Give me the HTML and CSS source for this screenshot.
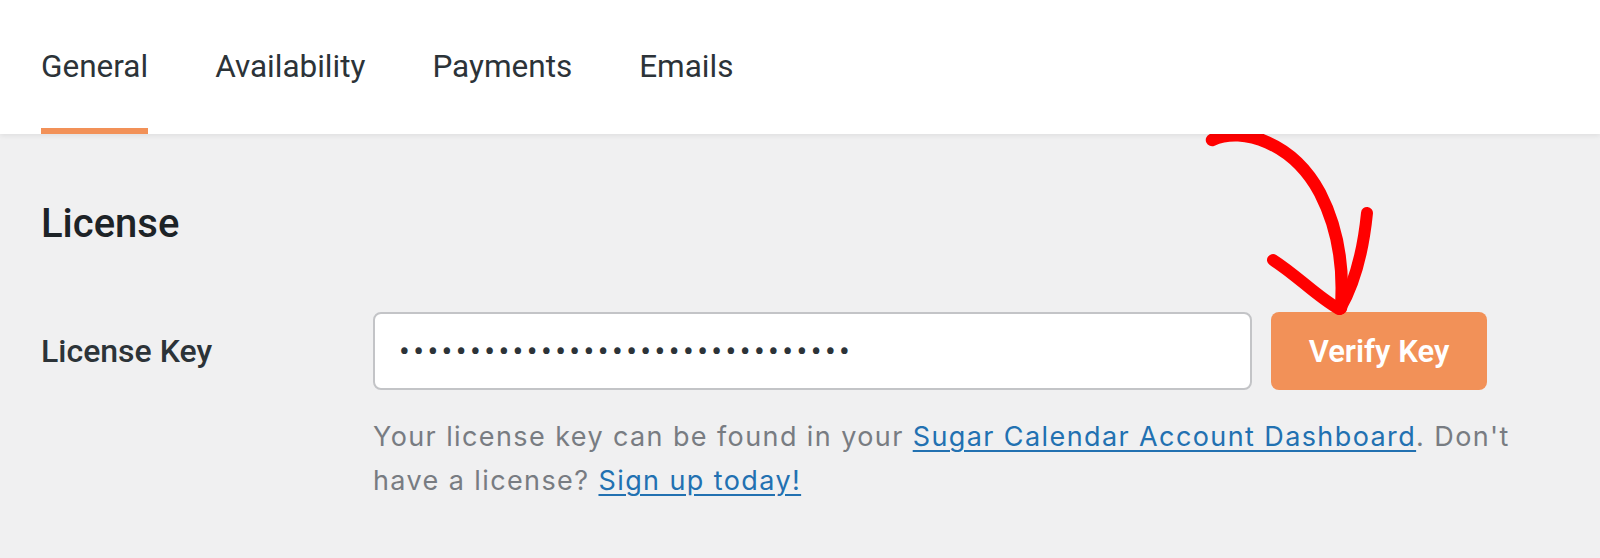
FILE: index.html
```html
<!DOCTYPE html>
<html lang="en">
<head>
<meta charset="utf-8">
<title>Settings - General</title>
<link rel="stylesheet" href="styles.css">
</head>
<body>
<header class="header">
  <nav class="tabs">
    <a class="tab tab-active">General</a>
    <a class="tab">Availability</a>
    <a class="tab">Payments</a>
    <a class="tab">Emails</a>
  </nav>
</header>
<main class="main">
  <h2 class="section-title">License</h2>
  <div class="row">
    <label class="row-label" for="key">License Key</label>
    <div class="row-field">
      <div class="field-line">
        <input id="key" class="key-input" type="password" value="abcdefghijklmnopqrstuvwxyz012345">
        <button class="verify-btn" type="button">Verify Key</button>
        <svg class="arrow" width="200" height="210" viewBox="0 0 200 210" aria-hidden="true">
          <path d="M14 22 C 45 8, 95 25, 122 75 C 140 110, 146 150, 143 190" fill="none" stroke="#ff0000" stroke-width="12.5" stroke-linecap="round"/>
          <path d="M75 142 C 100 158, 118 178, 141 191" fill="none" stroke="#ff0000" stroke-width="12" stroke-linecap="round"/>
          <path d="M169 95 C 166 125, 160 160, 142 191" fill="none" stroke="#ff0000" stroke-width="12" stroke-linecap="round"/>
        </svg>
      </div>
      <p class="help"><span class="help-line">Your license key can be found in your <a href="#" class="link">Sugar Calendar Account Dashboard</a>. Don't</span> <span class="help-line">have a license? <a href="#" class="link">Sign up today!</a></span></p>
    </div>
  </div>
</main>
</body>
</html>
```
FILE: styles.css
```css
* { box-sizing: border-box; }
html, body { margin: 0; padding: 0; }
body {
  background: #f0f0f1;
  font-family: Roboto, "Liberation Sans", Arial, sans-serif;
  color: #2c3338;
  height: 558px;
  overflow: hidden;
}
.header {
  background: #ffffff;
  height: 134px;
  box-shadow: 0 2px 5px rgba(0, 0, 0, 0.07);
  position: relative;
  z-index: 1;
}
.tabs {
  display: flex;
  gap: 67px;
  padding-left: 41px;
  height: 100%;
}
.tab {
  display: block;
  height: 134px;
  padding-top: 48px;
  font-size: 31.5px;
  line-height: 38px;
  color: #2c3338;
  text-decoration: none;
  border-bottom: 6px solid transparent;
}
.tab-active { border-bottom-color: #f29158; }
.main { padding: 0 41px; }
.section-title {
  margin: 66px 0 0;
  font-size: 40px;
  line-height: 48px;
  font-weight: 500;
  color: #1d2327;
}
.row {
  display: flex;
  margin-top: 64px;
}
.row-label {
  width: 332px;
  flex: none;
  font-size: 32px;
  line-height: 78px;
  font-weight: 500;
  color: #2c3338;
}
.row-field { flex: none; }
.field-line {
  display: flex;
  gap: 19px;
  position: relative;
}
.key-input {
  width: 879px;
  height: 78px;
  border: 2px solid #c3c4c7;
  border-radius: 8px;
  background: #fff;
  padding: 0 24px 0 24px;
  font-family: Roboto, sans-serif;
  font-size: 32px;
  letter-spacing: 3.4px;
  color: #2c3338;
  outline: none;
}
.verify-btn {
  width: 216px;
  height: 78px;
  border: none;
  border-radius: 8px;
  background: #f29158;
  color: #fff;
  font-family: Roboto, sans-serif;
  font-size: 31px;
  font-weight: 600;
  padding: 0;
}
.arrow {
  position: absolute;
  left: 825px;
  top: -194px;
  overflow: visible;
}
.help {
  margin: 25px 0 0;
  width: 1160px;
  font-family: Inter, Roboto, sans-serif;
  font-size: 27px;
  letter-spacing: 1.4px;
  line-height: 44px;
  color: #787c82;
}
.help-line { white-space: nowrap; }
.link { color: #2271b1; text-decoration: underline; text-underline-offset: 4px; }
```
